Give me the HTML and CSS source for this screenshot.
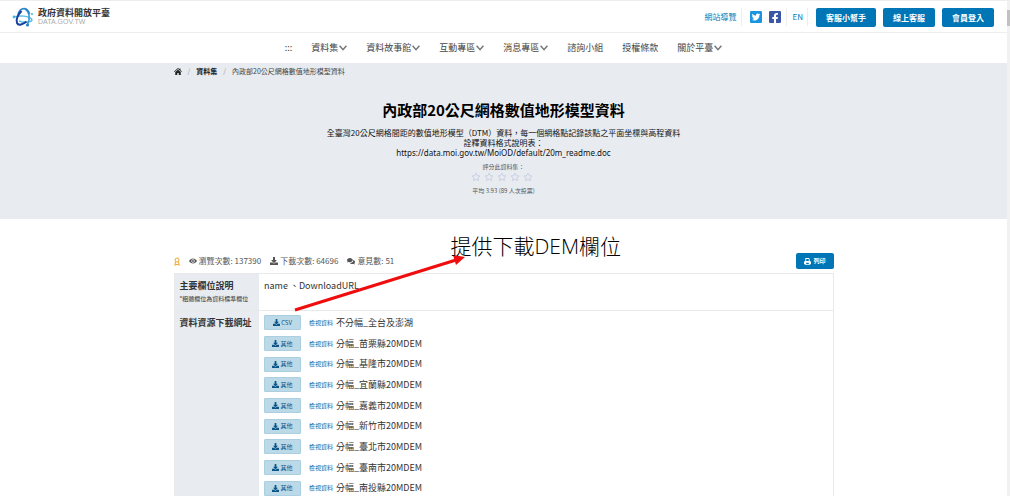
FILE: index.html
```html
<!DOCTYPE html>
<html lang="zh-Hant">
<head>
<meta charset="utf-8">
<title>內政部20公尺網格數值地形模型資料</title>
<link rel="stylesheet" href="styles.css">
</head>
<body>
<svg class="defs" aria-hidden="true">
  <symbol id="download" viewBox="0 0 512 512"><path d="M216 0h80c13.3 0 24 10.7 24 24v168h87.7c17.8 0 26.7 21.5 14.1 34.1L269.7 378.3c-7.5 7.5-19.8 7.5-27.3 0L90.1 226.1c-12.6-12.6-3.7-34.1 14.1-34.1H192V24c0-13.3 10.7-24 24-24zm296 376v112c0 13.3-10.7 24-24 24H24c-13.3 0-24-10.7-24-24V376c0-13.3 10.7-24 24-24h146.7l49 49c20.1 20.1 52.5 20.1 72.6 0l49-49H488c13.3 0 24 10.7 24 24z"/></symbol>
  <symbol id="chevron" viewBox="0 0 8 6"><path d="M.6.8L4 4.700 7.400.8" fill="none" stroke="currentColor" stroke-width="1.500"/></symbol>
  <symbol id="star" viewBox="0 0 24 24"><path d="M12 2.500l2.900 6.200 6.700.8-5 4.600 1.400 6.700-6-3.400-6 3.400 1.400-6.700-5-4.600 6.700-.8z" fill="none" stroke="currentColor" stroke-width="2"/></symbol>
</svg>
<div class="page">
  <div class="content">
    <header class="topbar">
      <a class="brand" href="#">
        <svg class="brand-mark" viewBox="0 0 22 20" aria-hidden="true">
          <path d="M2 10C8 8 17 9 19.500 12S13 16.500 7 14" fill="none" stroke="#59bfe6" stroke-width="1.500"/>
          <path d="M13 2C17.500 4.500 18.500 12 15.500 17.500" fill="none" stroke="#3c9bd6" stroke-width="1.700"/>
          <path d="M6 8C7 4 9.500 1.700 12 1.700S16.500 4 17.500 7" fill="none" stroke="#2f86cb" stroke-width="1.800"/>
          <path d="M9.500 4C6 7.500 3.500 13 5 16S11 17.500 14.500 14.500" fill="none" stroke="#173f9b" stroke-width="2"/>
          <circle cx="2" cy="10" r="1.400" fill="#4ab5e1"/><circle cx="20" cy="7" r="1.200" fill="#71cbea"/><circle cx="15.500" cy="18" r="1.600" fill="#2584c6"/>
        </svg>
        <span class="brand-text"><strong>政府資料開放平臺</strong><span class="brand-sub">DATA.GOV.TW</span></span>
      </a>
      <div class="tools">
        <a class="tool" href="#">網站導覽</a>
        <span class="tool social">
          <a class="twitter" href="#" aria-label="Twitter"><svg viewBox="0 32 448 448"><path d="M400 32H48C21.500 32 0 53.500 0 80v352c0 26.500 21.500 48 48 48h352c26.500 0 48-21.500 48-48V80c0-26.500-21.500-48-48-48zm-48.900 158.800c.2 2.800.2 5.700.2 8.500 0 86.700-66 186.600-186.600 186.600-37.200 0-71.700-10.800-100.700-29.400 5.300.6 10.400.8 15.800.8 30.700 0 58.900-10.400 81.400-28-28.800-.6-53-19.500-61.300-45.500 10.100 1.500 19.200 1.500 29.600-1.200-30-6.100-52.500-32.500-52.500-64.400v-.8c8.700 4.900 18.900 7.900 29.600 8.300a65.447 65.447 0 0 1-29.200-54.600c0-12.200 3.200-23.400 8.900-33.100 32.300 39.800 80.800 65.800 135.200 68.600-9.300-44.500 24-80.600 64-80.600 18.900 0 35.900 7.900 47.900 20.700 14.800-2.800 29-8.300 41.600-15.800-4.900 15.200-15.200 28-28.800 36.100 13.200-1.400 26-5.100 37.800-10.200-8.900 13.100-20.100 24.700-32.900 34z"/></svg></a>
          <a class="facebook" href="#" aria-label="Facebook"><svg viewBox="0 32 448 448"><path d="M400 32H48A48 48 0 0 0 0 80v352a48 48 0 0 0 48 48h137.250V327.690h-63V256h63v-54.640c0-62.150 37-96.480 93.670-96.480 27.140 0 55.520 4.840 55.520 4.840v61h-31.270c-30.810 0-40.420 19.120-40.420 38.730V256h68.780l-11 71.690h-57.780V480H400a48 48 0 0 0 48-48V80a48 48 0 0 0-48-48z"/></svg></a>
        </span>
        <a class="tool" href="#">EN</a>
        <div class="actions">
          <button class="primary" type="button">客服小幫手</button>
          <button class="primary" type="button">線上客服</button>
          <button class="primary" type="button">會員登入</button>
        </div>
      </div>
    </header>
    <nav class="nav">
      <a class="skip" href="#">:::</a>
      <button type="button">資料集<svg><use href="#chevron"/></svg></button>
      <button type="button">資料故事館<svg><use href="#chevron"/></svg></button>
      <button type="button">互動專區<svg><use href="#chevron"/></svg></button>
      <button type="button">消息專區<svg><use href="#chevron"/></svg></button>
      <a href="#">諮詢小組</a>
      <a href="#">授權條款</a>
      <button type="button">關於平臺<svg><use href="#chevron"/></svg></button>
    </nav>
    <section class="hero">
      <div class="container crumbs">
        <a href="#" aria-label="首頁"><svg viewBox="0 0 16 14"><path d="M8 0l3 2.600V1h2v3.400L16 7l-1 1-7-6-7 6-1-1z"/><path d="M8 3.300l5.500 4.700v6h-4v-4h-3v4h-4V8z"/></svg></a>
        <span class="slash">/</span><a class="strong" href="#">資料集</a><span class="slash">/</span><span>內政部20公尺網格數值地形模型資料</span>
      </div>
      <h1>內政部20公尺網格數值地形模型資料</h1>
      <p class="desc">全臺灣20公尺網格間距的數值地形模型（DTM）資料，每一個網格點記錄該點之平面坐標與高程資料</p>
      <p class="desc">詮釋資料格式說明表：</p>
      <p class="desc link">https://data.moi.gov.tw/MoiOD/default/20m_readme.doc</p>
      <p class="rate">評分此資料集：</p>
      <div class="stars">
        <button type="button" aria-label="1"><svg><use href="#star"/></svg></button>
        <button type="button" aria-label="2"><svg><use href="#star"/></svg></button>
        <button type="button" aria-label="3"><svg><use href="#star"/></svg></button>
        <button type="button" aria-label="4"><svg><use href="#star"/></svg></button>
        <button type="button" aria-label="5"><svg><use href="#star"/></svg></button>
      </div>
      <p class="rate">平均 3.93 (89 人次投票)</p>
    </section>
    <main class="container main">
      <div class="stats">
        <svg class="medal" viewBox="0 0 6 9" aria-hidden="true"><circle cx="3" cy="3" r="2"/><path d="M1.500 5L.8 8.300 3 7.200l2.200 1.100L4.500 5"/></svg>
        <span class="stat"><svg viewBox="0 0 18 16"><path fill-rule="evenodd" d="M9 2.500c4 0 7 2.300 9 5.500-2 3.200-5 5.500-9 5.500S2 11.200 0 8c2-3.200 5-5.500 9-5.500zm0 1.700a3.800 3.800 0 1 0 0 7.600 3.800 3.800 0 0 0 0-7.600zm0 1.600a2.200 2.200 0 1 1 0 4.400 2.200 2.200 0 0 1 0-4.400z"/></svg>瀏覽次數: 137390</span>
        <span class="stat"><svg><use href="#download"/></svg>下載次數: 64696</span>
        <span class="stat"><svg viewBox="0 0 18 16"><path d="M6.500 1C10 1 13 3.200 13 6s-3 5-6.500 5c-1 0-2-.2-2.800-.5C2.700 11.200 1.500 11.500 0 11.500c.8-.8 1.300-1.700 1.400-2.500C.5 8.200 0 7.100 0 6c0-2.800 3-5 6.500-5z"/><path d="M14.300 5.500C16.500 6.300 18 8 18 10c0 1.100-.5 2.200-1.400 3 .1.800.6 1.700 1.400 2.500-1.500 0-2.700-.3-3.700-1-3.300 1.100-6.800.1-8.300-2.300 4.500.3 8.500-2.200 8.300-6.700z"/></svg>意見數: 51</span>
        <button class="primary print" type="button"><svg viewBox="0 0 16 16"><path fill-rule="evenodd" d="M3 0h8l2 2v5h1l2 2v5h-3v2H3v-2H0V9l2-2h1zm2 2v5h6V3L10 2zm0 9v3h6v-3z"/></svg>列印</button>
      </div>
      <table class="data">
        <tr>
          <th scope="row">主要欄位說明<small>*粗體欄位為資料標準欄位</small></th>
          <td class="fields">name 、DownloadURL</td>
        </tr>
        <tr>
          <th scope="row">資料資源下載網址</th>
          <td>
            <ul class="files">
              <li><button class="file" type="button"><svg><use href="#download"/></svg>CSV</button><a href="#">檢視資料</a>不分幅_全台及澎湖</li>
              <li><button class="file" type="button"><svg><use href="#download"/></svg>其他</button><a href="#">檢視資料</a>分幅_苗栗縣20MDEM</li>
              <li><button class="file" type="button"><svg><use href="#download"/></svg>其他</button><a href="#">檢視資料</a>分幅_基隆市20MDEM</li>
              <li><button class="file" type="button"><svg><use href="#download"/></svg>其他</button><a href="#">檢視資料</a>分幅_宜蘭縣20MDEM</li>
              <li><button class="file" type="button"><svg><use href="#download"/></svg>其他</button><a href="#">檢視資料</a>分幅_嘉義市20MDEM</li>
              <li><button class="file" type="button"><svg><use href="#download"/></svg>其他</button><a href="#">檢視資料</a>分幅_新竹市20MDEM</li>
              <li><button class="file" type="button"><svg><use href="#download"/></svg>其他</button><a href="#">檢視資料</a>分幅_臺北市20MDEM</li>
              <li><button class="file" type="button"><svg><use href="#download"/></svg>其他</button><a href="#">檢視資料</a>分幅_臺南市20MDEM</li>
              <li><button class="file" type="button"><svg><use href="#download"/></svg>其他</button><a href="#">檢視資料</a>分幅_南投縣20MDEM</li>
            </ul>
          </td>
        </tr>
      </table>
      <svg class="arrow" viewBox="0 0 172 60" aria-hidden="true"><path d="M1 56L162 6" stroke="#f00d0d" stroke-width="3"/><path d="M171 3l-9 8-3-10z" fill="#f00d0d"/></svg>
      <div class="note">提供下載DEM欄位</div>
    </main>
  </div>
  <div class="scroll"><div class="thumb"></div></div>
</div>
</body>
</html>
```
FILE: styles.css
```css
* { box-sizing: border-box; }
body {
  margin: 0;
  background: #fff;
  color: #333;
  font: 9px/12px "Noto Sans CJK TC", sans-serif;
}
a { color: inherit; text-decoration: none; }
button { border: 0; padding: 0; background: none; color: inherit; font: inherit; }
h1, p, ul { margin: 0; padding: 0; }
svg { display: block; fill: currentColor; }
.defs { position: absolute; width: 0; height: 0; }

.page { display: flex; height: 100vh; overflow: hidden; border-top: 1px solid #eee; }
.content { flex: 1; min-width: 0; }
.scroll { width: 3px; padding-top: 9px; background: #f1f1f1; }
.thumb { height: 16px; background: #c1c1c1; }
.container { width: 100%; max-width: 660px; margin: 0 auto; }

.topbar {
  display: flex;
  align-items: center;
  justify-content: space-between;
  height: 32px;
  padding: 1px 13px 0 12px;
  border-bottom: 1px solid #eee;
}
.brand { display: flex; align-items: center; gap: 4px; }
.brand-mark { width: 22px; height: 20px; }
.brand-text { display: flex; flex-direction: column; color: #333; line-height: 10px; }
.brand-sub { color: #aaa; font: 7px/8px "Liberation Sans", sans-serif; }
.tools { display: flex; align-items: center; color: #0a78b0; font-size: 8px; }
.tool { height: 18px; padding: 0 4px 0 6px; border-right: 1px solid #eee; line-height: 18px; }
.social { display: flex; align-items: center; gap: 7px; padding: 0 5px 0 8px; }
.social svg { width: 12px; height: 12px; }
.twitter { color: #1b95e0; }
.facebook { color: #3b56a5; }
.actions { display: flex; gap: 7px; padding-left: 8px; }
.primary {
  height: 19px;
  padding: 0 10px;
  border-radius: 2px;
  background: #0076b6;
  color: #fff;
  font-weight: 700;
  line-height: 19px;
}

.nav {
  display: flex;
  align-items: center;
  justify-content: center;
  gap: 19px;
  height: 30px;
  color: #444;
}
.nav button { display: flex; align-items: center; gap: 1px; }
.nav svg { width: 8px; height: 6px; color: #777; }

.hero {
  display: flex;
  flex-direction: column;
  align-items: center;
  padding: 2px 0 23px;
  background: #e8ecf1;
  color: #111;
  text-align: center;
}
.crumbs { display: flex; align-items: center; gap: 6px; color: #444; font-size: 7px; }
.crumbs svg { width: 8px; height: 7px; color: #222; }
.crumbs .strong { color: #222; font-weight: 700; }
.slash { color: #999; }
h1 { margin: 22px 0 7px; color: #000; font-size: 15px; line-height: 22px; }
.desc { font-size: 8px; line-height: 10px; }
.link { font-family: "Noto Sans", sans-serif; }
.rate { margin-top: 4px; color: #555; font-size: 6px; line-height: 10px; }
.stars { display: flex; gap: 3px; padding-right: 4px; color: #c3cbe0; }
.stars svg { width: 10px; height: 10px; }

.main { position: relative; padding-top: 34px; }
.stats { display: flex; align-items: center; gap: 9px; margin-bottom: 4px; color: #555; font-size: 8px; }
.medal { width: 6px; height: 9px; fill: none; stroke: #eda52c; }
.stat { display: flex; align-items: center; gap: 2px; }
.stat svg { width: 8px; height: 8px; }
.print {
  display: flex;
  align-items: center;
  gap: 2px;
  height: 16px;
  margin-left: auto;
  padding: 0 8px;
  font-size: 6px;
  line-height: 16px;
}
.print svg { width: 7px; height: 7px; }

.data { width: 100%; border: 1px solid #e9e9e9; border-collapse: collapse; }
.data tr { border-bottom: 1px solid #e9e9e9; }
.data th {
  width: 85px;
  padding: 6px 0 5px 5px;
  background: #e8ecf1;
  text-align: left;
  vertical-align: top;
  white-space: nowrap;
}
.data small { display: block; margin-top: 1px; font-size: 6px; font-weight: 400; }
.data td { padding: 4px 5px; vertical-align: top; }
.data .fields { padding-top: 6px; }
.files { display: flex; flex-direction: column; gap: 6px; list-style: none; }
.files li { display: flex; align-items: center; height: 15px; }
.files li:nth-child(3n) { height: 14px; }
.files a { margin: 0 3px 0 8px; color: #0a64a0; font-size: 6px; }
.file {
  display: flex;
  align-items: center;
  justify-content: center;
  gap: 1px;
  width: 37px;
  height: 15px;
  border: 1px solid #a9cfe0;
  border-radius: 1px;
  background: #bcd9e8;
  color: #0a5688;
  font-size: 6px;
}
.file svg { width: 7px; height: 7px; }

.arrow { position: absolute; top: 35px; left: 120px; width: 172px; height: 60px; }
.note {
  position: absolute;
  top: 12px;
  left: 277px;
  color: #000;
  font-family: "Open Sans", "Noto Sans CJK TC", sans-serif;
  font-size: 21px;
  font-weight: 300;
  line-height: 30px;
  white-space: nowrap;
}
```
